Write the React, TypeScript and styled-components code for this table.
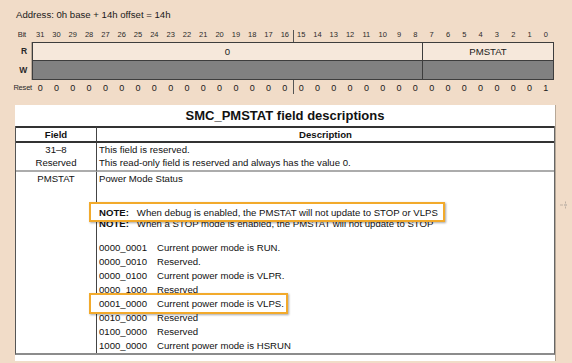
import React from "react";
import styled, { createGlobalStyle } from "styled-components";

const GlobalStyle = createGlobalStyle`
  html, body {
    margin: 0;
    padding: 0;
  }
  body {
    background: #f1dcc8;
    font-family: "Liberation Sans", Arial, sans-serif;
    color: #111;
    width: 572px;
    height: 363px;
    overflow: hidden;
  }
`;

const Page = styled.div`
  display: flex;
  flex-direction: column;
`;

const Address = styled.div`
  height: 22px;
  padding: 4px 0 0 16px;
  line-height: 22px;
  font-size: 9.6px;
  color: #1a1a1a;
`;

const Register = styled.div`
  display: grid;
  grid-template-columns: 32px repeat(32, 1fr);
  grid-template-rows: 16px 18px 20px 15px;
  width: 554px;
`;

const RowLabel = styled.div<{ $pr: number; $row: number; $big?: boolean }>`
  grid-column: 1;
  grid-row: ${(p) => p.$row};
  display: flex;
  align-items: center;
  justify-content: flex-end;
  padding-right: ${(p) => p.$pr}px;
  font-size: ${(p) => (p.$big ? "8.5px" : "7.5px")};
  font-weight: ${(p) => (p.$big ? "bold" : "normal")};
  color: #2a2a2a;
  letter-spacing: -0.2px;
`;

const BitCell = styled.div<{ $divider?: boolean }>`
  grid-row: 1;
  display: flex;
  align-items: center;
  justify-content: center;
  font-size: 7.5px;
  color: #2a2a2a;
  background: ${(p) =>
    p.$divider ? "linear-gradient(#555, #555) left 4px / 1px 12px no-repeat" : "none"};
`;

const ResetCell = styled.div<{ $divider?: boolean }>`
  grid-row: 4;
  display: flex;
  align-items: center;
  justify-content: center;
  font-size: 9px;
  color: #1a1a1a;
  background: ${(p) =>
    p.$divider ? "linear-gradient(#555, #555) left top / 1px 14px no-repeat" : "none"};
`;

const FieldBox = styled.div`
  grid-column: 2 / -1;
  grid-row: 2 / 4;
  display: grid;
  grid-template-columns: 24fr 8fr;
  grid-template-rows: 18px 1fr;
  border: 1px solid #3d3d3d;
  box-shadow: -1px 0 0 #b9a999;
`;

const ReadCell = styled.div<{ $split?: boolean }>`
  display: flex;
  align-items: center;
  justify-content: center;
  background: #f6e8db;
  border-bottom: 1px solid #3d3d3d;
  border-right: ${(p) => (p.$split ? "1px solid #3d3d3d" : "none")};
  font-size: 9.6px;
  color: #1a1a1a;
`;

const WriteCell = styled.div<{ $split?: boolean }>`
  background: #818181;
  border-right: ${(p) => (p.$split ? "1px solid #3d3d3d" : "none")};
`;

const Lower = styled.div`
  display: flex;
  margin-top: 10px;
`;

const Panel = styled.div`
  margin-left: 15px;
  width: 540px;
  padding-bottom: 6px;
  background: #fff;
  box-shadow: 1px 0 0 #b7a897;
`;

const Title = styled.div`
  height: 21px;
  line-height: 21px;
  text-align: center;
  font-size: 13px;
  font-weight: bold;
  color: #111;
`;

const FieldTable = styled.div`
  display: grid;
  grid-template-columns: 81px 1fr;
  border-left: 1px solid #555;
  border-right: 1px solid #666;
  border-bottom: 2px solid #8c8c8c;
  font-size: 9.6px;
`;

const HeadCell = styled.div<{ $first?: boolean }>`
  height: 13px;
  line-height: 13px;
  border-top: 2px solid #333;
  border-bottom: 2px solid #333;
  border-right: ${(p) => (p.$first ? "1px solid #444" : "none")};
  text-align: center;
  font-weight: bold;
`;

const Cell = styled.div<{ $first?: boolean; $sep?: boolean }>`
  line-height: 13px;
  padding: 0 0 ${(p) => (p.$sep ? "1px" : "0")} ${(p) => (p.$first ? "0" : "2px")};
  text-align: ${(p) => (p.$first ? "center" : "left")};
  border-right: ${(p) => (p.$first ? "1px solid #444" : "none")};
  border-bottom: ${(p) => (p.$sep ? "2px solid #acacac" : "none")};
`;

const Highlight = styled.div<{ $pt: number; $pb: number; $pr: number; $mt: number; $mb: number }>`
  position: relative;
  z-index: 1;
  width: fit-content;
  margin: ${(p) => `${p.$mt}px 0 ${p.$mb}px -10px`};
  padding: ${(p) => `${p.$pt}px ${p.$pr}px ${p.$pb}px 8px`};
  background: #fff;
  border: 2px solid #f2aa2c;
  box-shadow: 1px 1px 2px rgba(0, 0, 0, 0.35);
`;

const Note = styled.div<{ $mt?: number }>`
  display: flex;
  line-height: 14px;
  margin-top: ${(p) => p.$mt ?? 0}px;
  white-space: nowrap;
`;

const NoteLabel = styled.span`
  font-weight: bold;
  margin-right: 8px;
`;

const ModeList = styled.div`
  margin-top: 10px;
`;

const ModeRow = styled.div`
  display: grid;
  grid-template-columns: 58px auto;
  line-height: 14px;
  white-space: nowrap;
`;

const Gutter = styled.div`
  flex: 1;
  display: flex;
  justify-content: center;
  padding-top: 96px;
`;

const bits = Array.from({ length: 32 }, (_, i) => 31 - i);

const modes: [string, string][] = [
  ["0000_0001", "Current power mode is RUN."],
  ["0000_0010", "Reserved."],
  ["0000_0100", "Current power mode is VLPR."],
  ["0000_1000", "Reserved"],
  ["0001_0000", "Current power mode is VLPS."],
  ["0010_0000", "Reserved"],
  ["0100_0000", "Reserved"],
  ["1000_0000", "Current power mode is HSRUN"],
];

export default function App() {
  return (
    <Page>
      <GlobalStyle />
      <Address>Address: 0h base + 14h offset = 14h</Address>

      <Register>
        <RowLabel $row={1} $pr={6}>Bit</RowLabel>
        {bits.map((b) => (
          <BitCell key={b} $divider={b === 15}>{b}</BitCell>
        ))}
        <RowLabel $row={2} $pr={5} $big>R</RowLabel>
        <RowLabel $row={3} $pr={5} $big>W</RowLabel>
        <FieldBox>
          <ReadCell $split>0</ReadCell>
          <ReadCell>PMSTAT</ReadCell>
          <WriteCell $split />
          <WriteCell />
        </FieldBox>
        <RowLabel $row={4} $pr={0}>Reset</RowLabel>
        {bits.map((b) => (
          <ResetCell key={b} $divider={b === 15}>{b === 0 ? 1 : 0}</ResetCell>
        ))}
      </Register>

      <Lower>
        <Panel>
          <Title>SMC_PMSTAT field descriptions</Title>
          <FieldTable>
            <HeadCell $first>Field</HeadCell>
            <HeadCell>Description</HeadCell>

            <Cell $first $sep>
              31–8
              <br />
              Reserved
            </Cell>
            <Cell $sep>
              This field is reserved.
              <br />
              This read-only field is reserved and always has the value 0.
            </Cell>

            <Cell $first>PMSTAT</Cell>
            <Cell>
              Power Mode Status
              <Highlight $mt={17} $mb={-5} $pt={2} $pb={0} $pr={5}>
                <Note>
                  <NoteLabel>NOTE:</NoteLabel>
                  When debug is enabled, the PMSTAT will not update to STOP or VLPS
                </Note>
              </Highlight>
              <Note>
                <NoteLabel>NOTE:</NoteLabel>
                When a STOP mode is enabled, the PMSTAT will not update to STOP
              </Note>
              <ModeList>
                {modes.map(([code, text]) =>
                  code === "0001_0000" ? (
                    <Highlight key={code} $mt={-4} $mb={-3} $pt={2} $pb={1} $pr={2}>
                      <ModeRow>
                        <span>{code}</span>
                        <span>{text}</span>
                      </ModeRow>
                    </Highlight>
                  ) : (
                    <ModeRow key={code}>
                      <span>{code}</span>
                      <span>{text}</span>
                    </ModeRow>
                  )
                )}
              </ModeList>
            </Cell>
          </FieldTable>
        </Panel>
        <Gutter>
          <svg width="8" height="8" viewBox="0 0 8 8">
            <rect x="0" y="3.5" width="3" height="1" fill="#bfb0a2" />
            <rect x="5" y="0.5" width="1" height="2" fill="#bfb0a2" />
            <rect x="5" y="5.5" width="1" height="2" fill="#bfb0a2" />
            <rect x="4" y="3" width="3" height="2" fill="#cdbfb2" />
          </svg>
        </Gutter>
      </Lower>
    </Page>
  );
}
